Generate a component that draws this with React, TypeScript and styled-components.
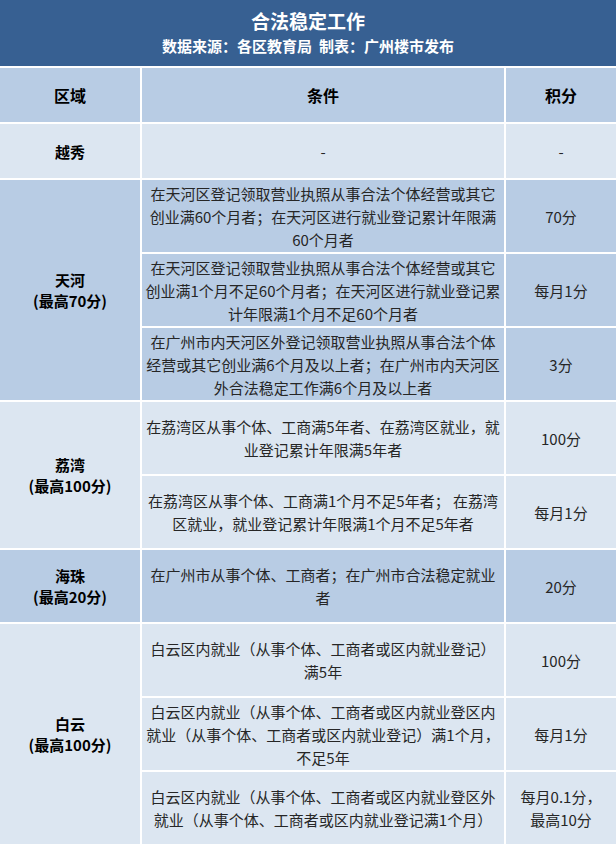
import React from "react";
import styled, { createGlobalStyle } from "styled-components";

const Global = createGlobalStyle`
  html, body { margin: 0; padding: 0; background: #ffffff; }
  body { font-family: "Microsoft YaHei", "Noto Sans CJK SC", "Noto Sans", sans-serif; }
`;

type Tone = "dark" | "light";

const toneColor: Record<Tone, string> = {
  dark: "#b8cce4",
  light: "#dce6f1",
};

const Sheet = styled.div`
  display: grid;
  width: 616px;
  grid-template-columns: 140px 362px 110px;
  grid-template-rows: 66px 54px 54px repeat(9, 72px);
  gap: 2px;
  background: #ffffff;
`;

const TitleBand = styled.header`
  grid-column: 1 / -1;
  background: #376092;
  color: #ffffff;
  display: flex;
  flex-direction: column;
  align-items: center;
  justify-content: center;
  font-weight: 700;
`;

const Title = styled.h1`
  margin: 0;
  font-size: 19px;
  line-height: 24px;
  font-weight: 700;
`;

const Subtitle = styled.p`
  margin: 2px 0 0;
  font-size: 15px;
  line-height: 22px;
  font-weight: 700;
`;

const Cell = styled.div<{ $tone: Tone; $span?: number; $bold?: boolean; $size?: number }>`
  grid-row: span ${(p) => p.$span ?? 1};
  background: ${(p) => toneColor[p.$tone]};
  display: flex;
  flex-direction: column;
  align-items: center;
  justify-content: center;
  text-align: center;
  color: ${(p) => (p.$bold ? "#000000" : "#262626")};
  font-weight: ${(p) => (p.$bold ? 700 : 400)};
  font-size: ${(p) => p.$size ?? 15}px;
  line-height: ${(p) => (p.$bold ? 21 : 23)}px;
  white-space: nowrap;
`;

const Line = styled.span`
  display: block;
`;

type Rule = { cond: string[]; score: string[] };
type Group = { label: string[]; tone: Tone; rules: Rule[] };

const groups: Group[] = [
  { label: ["越秀"], tone: "light", rules: [{ cond: ["-"], score: ["-"] }] },
  {
    label: ["天河", "(最高70分)"],
    tone: "dark",
    rules: [
      {
        cond: [
          "在天河区登记领取营业执照从事合法个体经营或其它",
          "创业满60个月者；在天河区进行就业登记累计年限满",
          "60个月者",
        ],
        score: ["70分"],
      },
      {
        cond: [
          "在天河区登记领取营业执照从事合法个体经营或其它",
          "创业满1个月不足60个月者；在天河区进行就业登记累",
          "计年限满1个月不足60个月者",
        ],
        score: ["每月1分"],
      },
      {
        cond: [
          "在广州市内天河区外登记领取营业执照从事合法个体",
          "经营或其它创业满6个月及以上者；在广州市内天河区",
          "外合法稳定工作满6个月及以上者",
        ],
        score: ["3分"],
      },
    ],
  },
  {
    label: ["荔湾", "(最高100分)"],
    tone: "light",
    rules: [
      {
        cond: ["在荔湾区从事个体、工商满5年者、在荔湾区就业，就", "业登记累计年限满5年者"],
        score: ["100分"],
      },
      {
        cond: ["在荔湾区从事个体、工商满1个月不足5年者； 在荔湾", "区就业，就业登记累计年限满1个月不足5年者"],
        score: ["每月1分"],
      },
    ],
  },
  {
    label: ["海珠", "(最高20分)"],
    tone: "dark",
    rules: [
      {
        cond: ["在广州市从事个体、工商者；在广州市合法稳定就业", "者"],
        score: ["20分"],
      },
    ],
  },
  {
    label: ["白云", "(最高100分)"],
    tone: "light",
    rules: [
      {
        cond: ["白云区内就业（从事个体、工商者或区内就业登记）", "满5年"],
        score: ["100分"],
      },
      {
        cond: [
          "白云区内就业（从事个体、工商者或区内就业登区内",
          "就业（从事个体、工商者或区内就业登记）满1个月，",
          "不足5年",
        ],
        score: ["每月1分"],
      },
      {
        cond: ["白云区内就业（从事个体、工商者或区内就业登区外", "就业（从事个体、工商者或区内就业登记满1个月）"],
        score: ["每月0.1分，", "最高10分"],
      },
    ],
  },
];

const Lines: React.FC<{ lines: string[] }> = ({ lines }) => (
  <>
    {lines.map((l, i) => (
      <Line key={i}>{l}</Line>
    ))}
  </>
);

export default function App() {
  return (
    <>
      <Global />
      <Sheet>
        <TitleBand>
          <Title>合法稳定工作</Title>
          <Subtitle>数据来源：各区教育局&nbsp;&nbsp;制表：广州楼市发布</Subtitle>
        </TitleBand>
        <Cell $tone="dark" $bold $size={16}>区域</Cell>
        <Cell $tone="dark" $bold $size={16}>条件</Cell>
        <Cell $tone="dark" $bold $size={16}>积分</Cell>
        {groups.map((g) => (
          <React.Fragment key={g.label[0]}>
            <Cell $tone={g.tone} $bold $span={g.rules.length}>
              <Lines lines={g.label} />
            </Cell>
            {g.rules.map((r, i) => (
              <React.Fragment key={i}>
                <Cell $tone={g.tone}>
                  <Lines lines={r.cond} />
                </Cell>
                <Cell $tone={g.tone}>
                  <Lines lines={r.score} />
                </Cell>
              </React.Fragment>
            ))}
          </React.Fragment>
        ))}
      </Sheet>
    </>
  );
}
